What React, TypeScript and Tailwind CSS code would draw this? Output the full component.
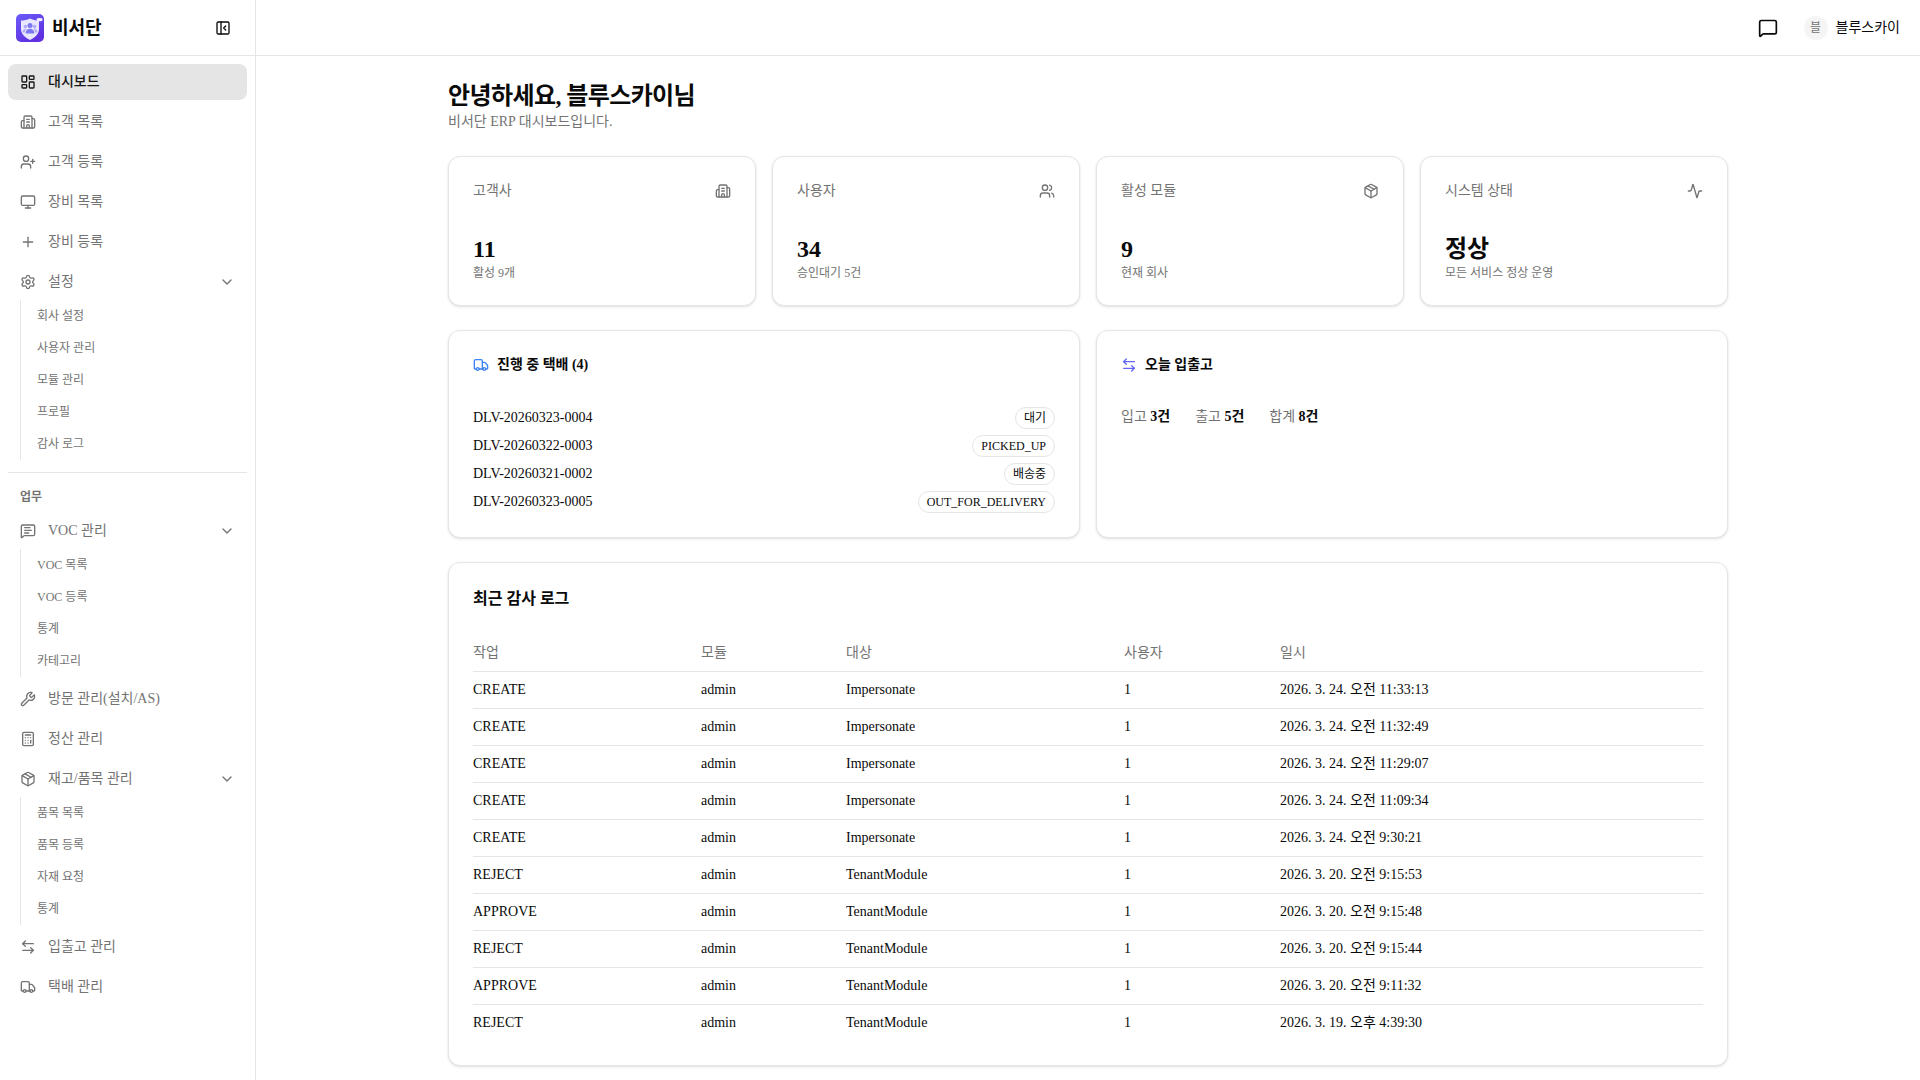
import React from "react";
import { LayoutDashboard, Building2, UserPlus, Monitor, Plus, Settings, ChevronDown, MessageSquareText, Wrench, Calculator, Package, ArrowLeftRight, Truck, PanelLeftClose, MessageSquare, Users, Activity } from "lucide-react";

function Logo() {
  return (
    <svg width="28" height="28" viewBox="0 0 28 28" className="shrink-0">
      <defs>
        <linearGradient id="lg" x1="0" y1="0" x2="0.6" y2="1">
          <stop offset="0" stopColor="#6a5cf8" />
          <stop offset="1" stopColor="#5f2fe0" />
        </linearGradient>
      </defs>
      <rect width="28" height="28" rx="5" fill="url(#lg)" />
      <path d="M14 4.5 C17 6 20 6.5 23 6.5 V15 C23 20 19 23.5 14 26 C9 23.5 5 20 5 15 V6.5 C8 6.5 11 6 14 4.5Z" fill="#e9e7ff" />
      <circle cx="9.4" cy="12.6" r="1.8" fill="#aeaaf6" />
      <circle cx="18.6" cy="12.6" r="1.8" fill="#aeaaf6" />
      <path d="M6.6 18.6c0-2 1.2-3.5 2.8-3.5l1 .5c-1 .8-1.5 1.8-1.6 3z M21.4 18.6c0-2-1.2-3.5-2.8-3.5l-1 .5c1 .8 1.5 1.8 1.6 3z" fill="#aeaaf6" />
      <circle cx="14" cy="11.4" r="2.5" fill="#7c78f2" />
      <path d="M9.6 19.6c0-3.2 2-4.9 4.4-4.9s4.4 1.7 4.4 4.9z" fill="#7c78f2" />
      <rect x="20.6" y="4" width="6" height="3.2" rx="1.6" fill="#efeeff" />
    </svg>
  );
}

type IconT = React.ComponentType<{ className?: string; strokeWidth?: number }>;

function NavItem({ icon: Icon, label, active, chevron }: { icon: IconT; label: string; active?: boolean; chevron?: boolean }) {
  return (
    <div className={`flex h-9 items-center gap-3 rounded-lg px-3 text-sm ${active ? "bg-[#e5e5e5] font-medium text-[#171717]" : "text-[#737373]"}`}>
      <Icon className="h-4 w-4 shrink-0" />
      <span className="flex-1">{label}</span>
      {chevron && <ChevronDown className="h-4 w-4 shrink-0" />}
    </div>
  );
}

function SubList({ items }: { items: string[] }) {
  return (
    <div className="ml-3 border-l border-[#e5e5e5] pl-3">
      {items.map((t, i) => (
        <div key={i} className="flex h-8 items-center px-1 text-xs text-[#737373]">{t}</div>
      ))}
    </div>
  );
}

function Sidebar() {
  return (
    <aside className="flex h-screen w-64 shrink-0 flex-col border-r border-[#e5e5e5] bg-white">
      <div className="flex h-14 shrink-0 items-center justify-between border-b border-[#e5e5e5] pl-4 pr-[24px]">
        <div className="flex items-center gap-2">
          <Logo />
          <span className="text-lg font-bold text-[#0a0a0a]">비서단</span>
        </div>
        <PanelLeftClose className="h-4 w-4 text-[#0a0a0a]" />
      </div>
      <nav className="flex flex-col px-2 pt-2">
        <div className="flex flex-col gap-1">
          <NavItem icon={LayoutDashboard} label="대시보드" active />
          <NavItem icon={Building2} label="고객 목록" />
          <NavItem icon={UserPlus} label="고객 등록" />
          <NavItem icon={Monitor} label="장비 목록" />
          <NavItem icon={Plus} label="장비 등록" />
          <div>
            <NavItem icon={Settings} label="설정" chevron />
            <SubList items={["회사 설정", "사용자 관리", "모듈 관리", "프로필", "감사 로그"]} />
          </div>
        </div>
        <div className="mt-3 border-t border-[#e5e5e5]" />
        <div className="mt-2 flex h-8 items-center px-3 text-xs font-semibold text-[#737373]">업무</div>
        <div className="flex flex-col gap-1">
          <div>
            <NavItem icon={MessageSquareText} label="VOC 관리" chevron />
            <SubList items={["VOC 목록", "VOC 등록", "통계", "카테고리"]} />
          </div>
          <NavItem icon={Wrench} label="방문 관리(설치/AS)" />
          <NavItem icon={Calculator} label="정산 관리" />
          <div>
            <NavItem icon={Package} label="재고/품목 관리" chevron />
            <SubList items={["품목 목록", "품목 등록", "자재 요청", "통계"]} />
          </div>
          <NavItem icon={ArrowLeftRight} label="입출고 관리" />
          <NavItem icon={Truck} label="택배 관리" />
        </div>
      </nav>
    </aside>
  );
}

function Card({ className = "", children }: { className?: string; children: React.ReactNode }) {
  return <div className={`rounded-xl border border-[#e5e5e5] bg-white p-6 shadow-sm ${className}`}>{children}</div>;
}

function Stat({ title, icon: Icon, value, sub }: { title: string; icon: IconT; value: string; sub: string }) {
  return (
    <Card>
      <div className="mb-8 flex items-center justify-between">
        <span className="text-sm text-[#737373]">{title}</span>
        <Icon className="h-4 w-4 text-[#737373]" />
      </div>
      <div className="text-2xl font-bold text-[#0a0a0a]">{value}</div>
      <div className="text-xs text-[#737373]">{sub}</div>
    </Card>
  );
}

const deliveries = [
  ["DLV-20260323-0004", "대기"],
  ["DLV-20260322-0003", "PICKED_UP"],
  ["DLV-20260321-0002", "배송중"],
  ["DLV-20260323-0005", "OUT_FOR_DELIVERY"],
];

const logs = [
  ["CREATE", "admin", "Impersonate", "1", "2026. 3. 24. 오전 11:33:13"],
  ["CREATE", "admin", "Impersonate", "1", "2026. 3. 24. 오전 11:32:49"],
  ["CREATE", "admin", "Impersonate", "1", "2026. 3. 24. 오전 11:29:07"],
  ["CREATE", "admin", "Impersonate", "1", "2026. 3. 24. 오전 11:09:34"],
  ["CREATE", "admin", "Impersonate", "1", "2026. 3. 24. 오전 9:30:21"],
  ["REJECT", "admin", "TenantModule", "1", "2026. 3. 20. 오전 9:15:53"],
  ["APPROVE", "admin", "TenantModule", "1", "2026. 3. 20. 오전 9:15:48"],
  ["REJECT", "admin", "TenantModule", "1", "2026. 3. 20. 오전 9:15:44"],
  ["APPROVE", "admin", "TenantModule", "1", "2026. 3. 20. 오전 9:11:32"],
  ["REJECT", "admin", "TenantModule", "1", "2026. 3. 19. 오후 4:39:30"],
];

export default function App() {
  return (
    <div className="flex h-screen overflow-hidden bg-white font-['Liberation_Serif','Noto_Sans_CJK_KR',serif] text-[#0a0a0a]">
      <Sidebar />
      <div className="flex min-w-0 flex-1 flex-col">
        <header className="flex h-14 shrink-0 items-center justify-end gap-[26px] border-b border-[#e5e5e5] bg-white pr-5">
          <MessageSquare className="h-5 w-5 text-[#0a0a0a]" />
          <div className="flex items-center gap-2">
            <span className="flex h-6 w-6 items-center justify-center rounded-full bg-[#f5f5f5] text-xs text-[#737373]">블</span>
            <span className="text-sm">블루스카이</span>
          </div>
        </header>
        <main className="flex-1 overflow-hidden">
          <div className="mx-auto flex max-w-7xl flex-col gap-6 pt-6">
            <div>
              <h1 className="text-2xl font-bold tracking-tight">안녕하세요, 블루스카이님</h1>
              <p className="text-sm text-[#737373]">비서단 ERP 대시보드입니다.</p>
            </div>
            <div className="grid grid-cols-4 gap-4">
              <Stat title="고객사" icon={Building2} value="11" sub="활성 9개" />
              <Stat title="사용자" icon={Users} value="34" sub="승인대기 5건" />
              <Stat title="활성 모듈" icon={Package} value="9" sub="현재 회사" />
              <Stat title="시스템 상태" icon={Activity} value="정상" sub="모든 서비스 정상 운영" />
            </div>
            <div className="grid grid-cols-2 gap-4">
              <Card>
                <div className="mb-8 flex items-center gap-2 text-sm font-semibold">
                  <Truck className="h-4 w-4 text-[#3b82f6]" />
                  진행 중 택배 (4)
                </div>
                <div className="flex flex-col gap-1.5">
                  {deliveries.map(([id, st]) => (
                    <div key={id} className="flex items-center justify-between text-sm">
                      <span>{id}</span>
                      <span className="rounded-full border border-[#e5e5e5] px-2 py-0.5 text-xs">{st}</span>
                    </div>
                  ))}
                </div>
              </Card>
              <Card>
                <div className="mb-8 flex items-center gap-2 text-sm font-semibold">
                  <ArrowLeftRight className="h-4 w-4 text-[#6366f1]" />
                  오늘 입출고
                </div>
                <div className="flex gap-[25px] text-sm text-[#737373]">
                  <span>입고 <b className="font-semibold text-[#0a0a0a]">3건</b></span>
                  <span>출고 <b className="font-semibold text-[#0a0a0a]">5건</b></span>
                  <span>합계 <b className="font-semibold text-[#0a0a0a]">8건</b></span>
                </div>
              </Card>
            </div>
            <Card>
              <div className="mb-6 text-base font-semibold">최근 감사 로그</div>
              <table className="w-full table-fixed text-sm">
                <thead>
                  <tr className="border-b border-[#e5e5e5] text-left text-[#737373]">
                    <th className="w-[228px] py-2 font-normal">작업</th>
                    <th className="w-[145px] py-2 font-normal">모듈</th>
                    <th className="w-[278px] py-2 font-normal">대상</th>
                    <th className="w-[156px] py-2 font-normal">사용자</th>
                    <th className="py-2 font-normal">일시</th>
                  </tr>
                </thead>
                <tbody>
                  {logs.map((r, i) => (
                    <tr key={i} className="border-b border-[#e5e5e5] last:border-0">
                      {r.map((c, j) => (
                        <td key={j} className="py-2">{c}</td>
                      ))}
                    </tr>
                  ))}
                </tbody>
              </table>
            </Card>
          </div>
        </main>
      </div>
    </div>
  );
}
